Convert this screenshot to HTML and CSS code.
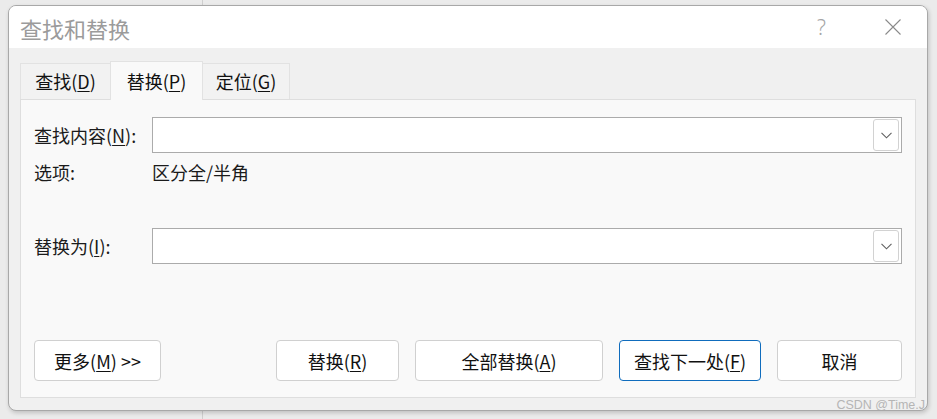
FILE: index.html
```html
<!DOCTYPE html>
<html lang="zh">
<head>
<meta charset="utf-8">
<title>查找和替换</title>
<link rel="stylesheet" href="styles.css">
</head>
<body>
<div class="dialog">
  <div class="titlebar">
    <span class="title">查找和替换</span>
    <span class="help">?</span>
    <span class="close">
      <svg width="16" height="16" viewBox="0 0 16 16"><path d="M0.5 0.5 L15.5 15.5 M15.5 0.5 L0.5 15.5" stroke="#8a8a8a" stroke-width="1.1" fill="none"/></svg>
    </span>
  </div>
  <div class="content">
    <div class="tabs">
      <div class="tab t1">查找(<u>D</u>)</div>
      <div class="tab t2 active">替换(<u>P</u>)</div>
      <div class="tab t3">定位(<u>G</u>)</div>
    </div>
    <div class="panel">
      <div class="row find">
        <label class="lbl">查找内容(<u>N</u>):</label>
        <div class="combo">
          <div class="field"></div>
          <div class="drop"><svg width="11" height="7" viewBox="0 0 11 7"><path d="M0.5 0.8 L5.5 5.8 L10.5 0.8" stroke="#606060" stroke-width="1.1" fill="none"/></svg></div>
        </div>
      </div>
      <div class="row options">
        <span class="lbl">选项:</span>
        <span class="val">区分全/半角</span>
      </div>
      <div class="row replace">
        <label class="lbl">替换为(<u>I</u>):</label>
        <div class="combo">
          <div class="field"></div>
          <div class="drop"><svg width="11" height="7" viewBox="0 0 11 7"><path d="M0.5 0.8 L5.5 5.8 L10.5 0.8" stroke="#606060" stroke-width="1.1" fill="none"/></svg></div>
        </div>
      </div>
      <div class="actions">
        <button class="btn more">更多(<u>M</u>) &gt;&gt;</button>
        <div class="right">
          <button class="btn w123">替换(<u>R</u>)</button>
          <button class="btn w188">全部替换(<u>A</u>)</button>
          <button class="btn primary">查找下一处(<u>F</u>)</button>
          <button class="btn w125">取消</button>
        </div>
      </div>
    </div>
  </div>
  <div class="watermark">CSDN @Time.J</div>
</div>
</body>
</html>
```

FILE: styles.css
```css
* { box-sizing: border-box; }
html, body { margin: 0; padding: 0; }
body {
  width: 937px;
  height: 419px;
  overflow: hidden;
  background: #ebebeb linear-gradient(to right, transparent 202px, #cfcfcf 202px, #cfcfcf 203px, transparent 203px);
  font-family: "Segoe UI", "Noto Sans CJK SC", sans-serif;
  color: #1b1b1b;
  padding: 5px 0 0 8px;
}
u { text-decoration: underline; text-underline-offset: 2px; text-decoration-thickness: 1px; }
.dialog {
  position: relative;
  width: 920px;
  height: 406px;
  border: 1px solid #a8a8a8;
  border-radius: 8px;
  overflow: hidden;
  display: flex;
  flex-direction: column;
  box-shadow: 1px 2px 4px rgba(0,0,0,0.18);
  background: #f0f0f0;
}
.titlebar {
  height: 42px;
  background: #ffffff;
  display: flex;
  align-items: center;
  padding-left: 11px;
  flex: none;
}
.title {
  font-size: 22px;
  color: #9b9b9b;
  line-height: 1;
  flex: 1;
  margin-top: 1px;
}
.help {
  font-family: "Segoe UI", "Noto Sans", sans-serif;
  font-size: 21px;
  color: #a5a5a5;
  font-weight: 300;
  line-height: 1;
  width: 10px;
  margin-right: 58px;
}
.close { width: 16px; height: 16px; margin-right: 26px; display: flex; }
.content {
  flex: 1;
  display: flex;
  flex-direction: column;
  padding: 13px 11px 12px 11px;
}
.tabs {
  display: flex;
  align-items: flex-end;
  height: 38px;
  flex: none;
}
.tab {
  height: 36px;
  border: 1px solid #e2e2e2;
  border-bottom: none;
  background: #f2f2f2;
  font-size: 18px;
  line-height: 34px;
  text-align: center;
  color: #111;
}
.tab + .tab { margin-left: -1px; }
.t1 { width: 91px; }
.t2 { width: 93px; }
.t3 { width: 88px; }
.tab.active {
  height: 39px;
  background: #f9f9f9;
  margin-bottom: -1px;
  position: relative;
  z-index: 1;
  line-height: 38px;
}
.panel {
  flex: 1;
  border: 1px solid #dedede;
  background: #f9f9f9;
  display: flex;
  flex-direction: column;
  padding: 17px 13px 16px 13px;
}
.row {
  display: flex;
  align-items: center;
}
.lbl {
  width: 118px;
  flex: none;
  font-size: 18px;
  line-height: 24px;
}
.val { font-size: 18px; line-height: 24px; }
.options { margin-top: 7px; }
.replace { margin-top: 44px; }
.combo {
  flex: 1;
  height: 36px;
  border: 1px solid #ababab;
  background: #ffffff;
  display: flex;
  align-items: stretch;
  padding: 1px 2px 1px 0;
}
.field { flex: 1; }
.drop {
  width: 26px;
  border: 1px solid #d2d2d2;
  border-radius: 3px;
  background: #ffffff;
  display: flex;
  align-items: center;
  justify-content: center;
}
.actions {
  margin-top: auto;
  display: flex;
  justify-content: space-between;
  align-items: center;
}
.right { display: flex; gap: 16px; }
.btn {
  height: 41px;
  border: 1px solid #d0d0d0;
  border-radius: 4px;
  background: #ffffff;
  font-family: inherit;
  font-size: 18px;
  color: #111;
  padding: 0;
  line-height: 1;
}
.more { width: 127px; }
.w123 { width: 123px; }
.w125 { width: 125px; }
.w188 { width: 188px; }
.primary { width: 142px; border-color: #0f6cbd; }
.watermark {
  position: absolute;
  right: 2px;
  bottom: -2px;
  font-family: "Liberation Sans", sans-serif;
  font-size: 12.5px;
  color: #b5b5b5;
  line-height: 14px;
}
```
